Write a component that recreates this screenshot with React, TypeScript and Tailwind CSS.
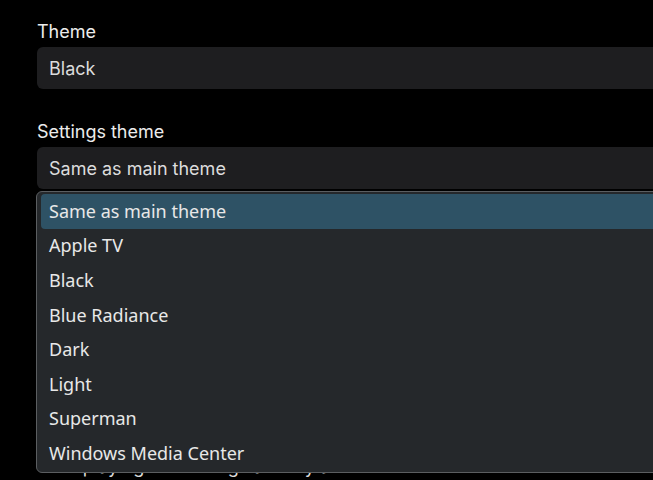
import { useState } from 'react';

const themes = [
  'Same as main theme',
  'Apple TV',
  'Black',
  'Blue Radiance',
  'Dark',
  'Light',
  'Superman',
  'Windows Media Center',
];

function Field({ label, value }: { label: string; value: string }) {
  return (
    <div className="flex flex-col">
      <label className="h-[24px] text-[18px] leading-[24px] text-[#ececec]">{label}</label>
      <div className="mt-[3px] flex h-[42px] w-[700px] items-center rounded-[6px] bg-[#1e1e20] px-[12px] text-[18px] text-[#dcdcdc]">
        {value}
      </div>
    </div>
  );
}

export default function App() {
  const [selected] = useState(0);

  return (
    <div
      className="h-[480px] w-[653px] overflow-hidden bg-black"
      style={{ fontFamily: 'Inter, "Noto Sans", sans-serif' }}
    >
      <div className="flex flex-col pl-[37px] pt-[20px]">
        <Field label="Theme" value="Black" />
        <div className="relative mt-[31px]">
          <Field label="Settings theme" value="Same as main theme" />
          <ul
            className="absolute left-[-1px] top-[71px] z-10 w-[700px] rounded-[6px] border border-[#5b5e61] bg-[#25282b] px-[4px] pb-[1px] pt-[2px] text-[18px] text-[#e8e8e8]"
            style={{ fontFamily: '"Noto Sans", sans-serif' }}
          >
            {themes.map((t, i) => (
              <li
                key={t}
                className={`flex h-[34.6px] items-center rounded-[4px] px-[8px] ${
                  i === selected ? 'bg-[#2e5265]' : ''
                }`}
              >
                {t}
              </li>
            ))}
          </ul>
        </div>
        <div className="mt-[266px] pl-[19px] text-[18px] leading-[24px] text-[#dcdcdc]">
          Displaying the settings as they are
        </div>
      </div>
    </div>
  );
}
